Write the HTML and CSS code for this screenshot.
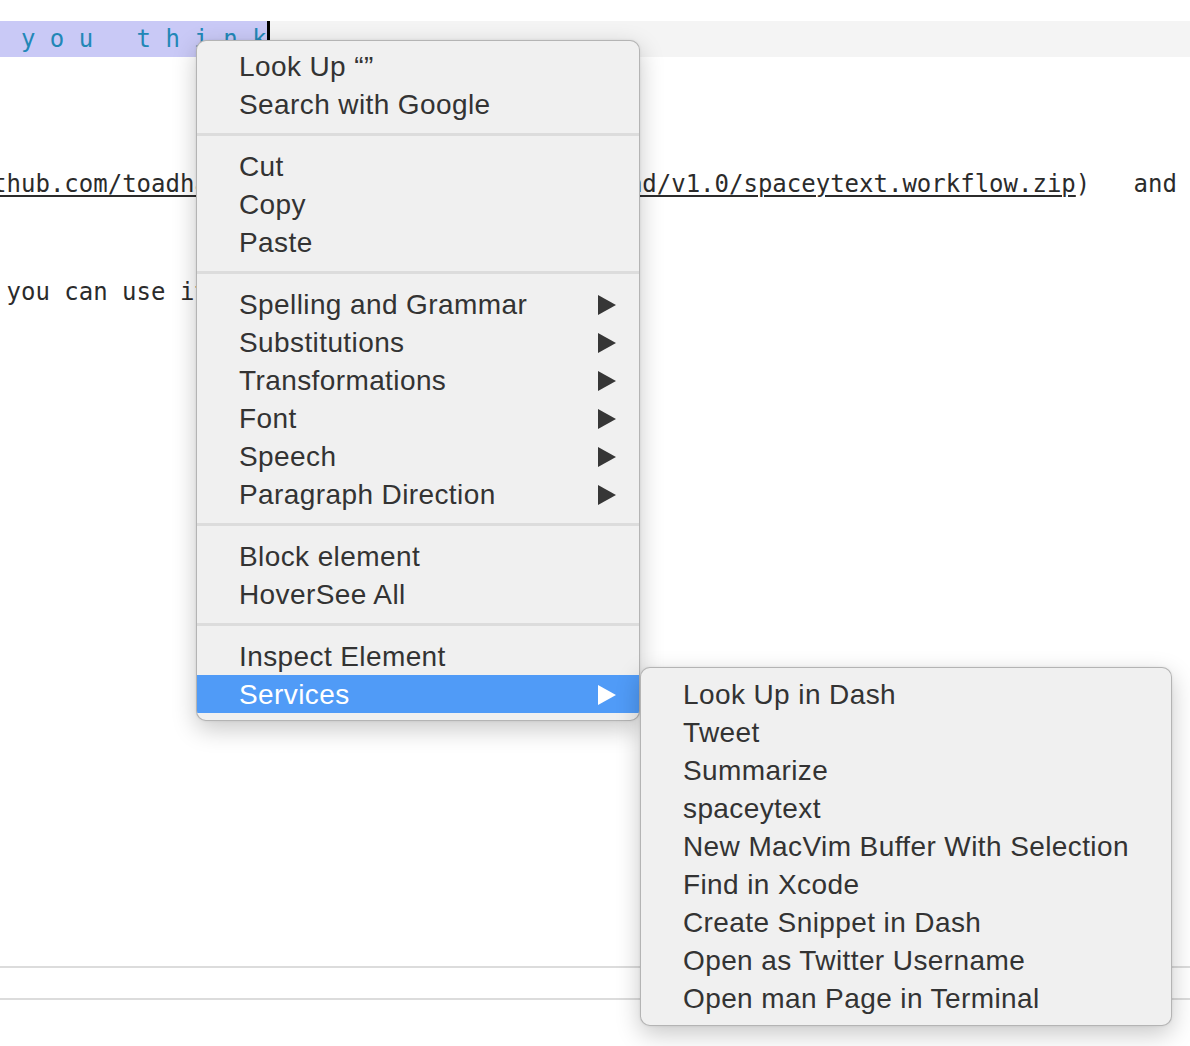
FILE: index.html
```html
<!DOCTYPE html>
<html>
<head>
<meta charset="utf-8">
<link rel="stylesheet" href="styles.css">
</head>
<body>
<div class="page">
  <div class="editor">
    <div class="line current"><span class="sel"> y o u   t h i n k</span><span class="cursor"></span></div>
    <div class="line"> </div>
    <div class="line"> </div>
    <div class="line"> </div>
    <div class="line"><span class="link">thub.com/toadhall/spaceytext/releases/download/v1.0/spaceytext.workflow.zip</span>)   and</div>
    <div class="line"> </div>
    <div class="line"> </div>
    <div class="line">you can use it</div>
  </div>
  <div class="rule"></div>
  <div class="gap"></div>
  <div class="rule"></div>
</div>

<div class="menu main-menu">
  <div class="item">Look Up “”</div>
  <div class="item">Search with Google</div>
  <div class="sep"></div>
  <div class="item">Cut</div>
  <div class="item">Copy</div>
  <div class="item">Paste</div>
  <div class="sep"></div>
  <div class="item"><span>Spelling and Grammar</span><svg class="arrow" viewBox="0 0 18 20"><polygon points="0,0 18,10 0,20"/></svg></div>
  <div class="item"><span>Substitutions</span><svg class="arrow" viewBox="0 0 18 20"><polygon points="0,0 18,10 0,20"/></svg></div>
  <div class="item"><span>Transformations</span><svg class="arrow" viewBox="0 0 18 20"><polygon points="0,0 18,10 0,20"/></svg></div>
  <div class="item"><span>Font</span><svg class="arrow" viewBox="0 0 18 20"><polygon points="0,0 18,10 0,20"/></svg></div>
  <div class="item"><span>Speech</span><svg class="arrow" viewBox="0 0 18 20"><polygon points="0,0 18,10 0,20"/></svg></div>
  <div class="item"><span>Paragraph Direction</span><svg class="arrow" viewBox="0 0 18 20"><polygon points="0,0 18,10 0,20"/></svg></div>
  <div class="sep"></div>
  <div class="item">Block element</div>
  <div class="item">HoverSee All</div>
  <div class="sep"></div>
  <div class="item">Inspect Element</div>
  <div class="item active"><span>Services</span><svg class="arrow" viewBox="0 0 18 20"><polygon points="0,0 18,10 0,20"/></svg></div>
</div>

<div class="menu sub-menu">
  <div class="item">Look Up in Dash</div>
  <div class="item">Tweet</div>
  <div class="item">Summarize</div>
  <div class="item">spaceytext</div>
  <div class="item">New MacVim Buffer With Selection</div>
  <div class="item">Find in Xcode</div>
  <div class="item">Create Snippet in Dash</div>
  <div class="item">Open as Twitter Username</div>
  <div class="item">Open man Page in Terminal</div>
</div>
</body>
</html>
```

FILE: styles.css
```css
html, body {
  margin: 0;
  padding: 0;
  background: #ffffff;
  overflow: hidden;
  width: 1190px;
  height: 1046px;
}

.page {
  width: 1190px;
  height: 1046px;
  overflow: hidden;
}

.editor {
  height: 944.9px;
  padding: 21.1px 0 0 6.5px;
  font-family: "DejaVu Sans Mono", "Liberation Mono", monospace;
  font-size: 24px;
  color: #2b2b2b;
}

.line {
  height: 36.2px;
  line-height: 36.2px;
  white-space: pre;
}

.line.current {
  background: #f4f4f4;
  display: flex;
  align-items: stretch;
  margin-left: -6.5px;
}

.sel {
  background: #c9c9f6;
  color: #2287b6;
  height: 35.5px;
  padding-left: 6.5px;
}

.cursor {
  display: block;
  width: 3px;
  background: #000;
  height: 30px;
}

.link {
  display: inline-block;
  margin-left: -14.4px;
  text-decoration: underline;
  text-decoration-thickness: 1.5px;
  text-underline-offset: 3px;
}

.rule {
  height: 2px;
  background: #dcdcdc;
}

.gap {
  height: 30px;
}

.menu {
  position: absolute;
  box-sizing: border-box;
  background: #f0f0f0;
  border: 1px solid rgba(0, 0, 0, 0.25);
  border-radius: 10px;
  box-shadow: 0 8px 24px rgba(0, 0, 0, 0.22), 0 0 3px rgba(0, 0, 0, 0.08);
  font-family: "Liberation Sans", Arial, sans-serif;
  font-size: 28px;
  letter-spacing: 0.4px;
  color: #333333;
  overflow: hidden;
}

.main-menu {
  left: 196px;
  top: 40px;
  width: 444px;
  height: 681px;
  padding: 6px 0 7px;
  z-index: 2;
}

.sub-menu {
  left: 640px;
  top: 667px;
  width: 532px;
  height: 359px;
  padding: 7px 0 8px;
  z-index: 3;
}

.item {
  height: 38px;
  line-height: 38px;
  padding: 1px 23px 0 42px;
  display: flex;
  align-items: center;
  justify-content: space-between;
  white-space: nowrap;
  box-sizing: border-box;
}

.item.active {
  background: #509bf7;
  color: #ffffff;
}

.arrow {
  width: 18px;
  height: 20px;
  fill: #363636;
}

.item.active .arrow {
  fill: #ffffff;
}

.sep {
  height: 3px;
  margin: 10px 0 11px;
  background: #dcdcdc;
}
```
